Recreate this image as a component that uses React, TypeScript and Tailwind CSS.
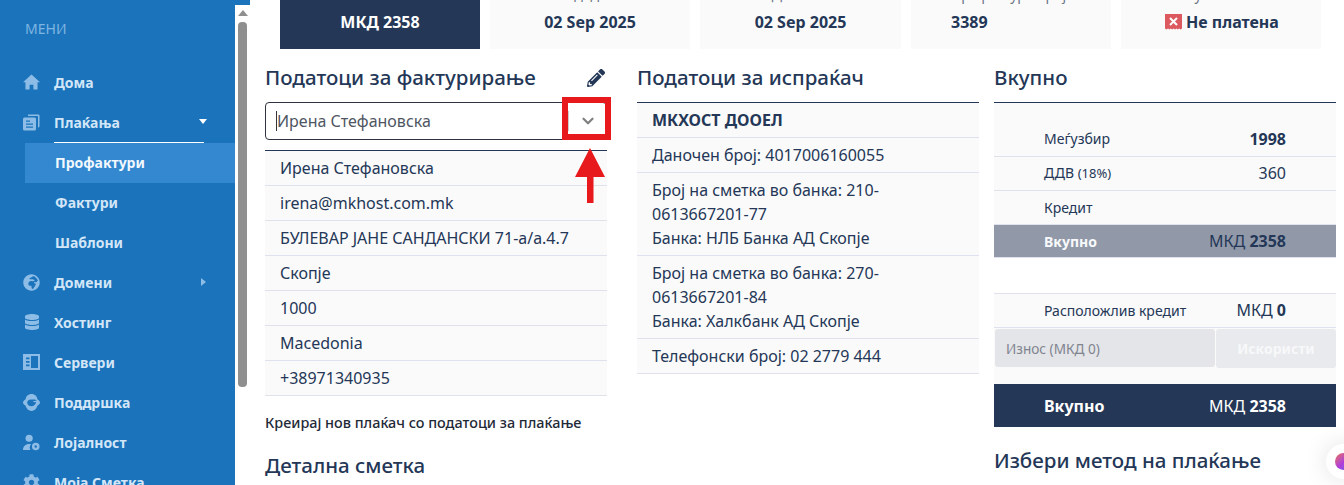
import React from "react";
import { FaGlobeAfrica, FaDatabase, FaCog, FaPencilAlt } from "react-icons/fa";
import { LuChevronDown } from "react-icons/lu";

const HomeIcon = () => (
  <svg width="18" height="16" viewBox="0 0 18 16" fill="currentColor">
    <path fillRule="evenodd" d="M9 0L18 8.300h-2.600V16H11v-5.200H7V16H2.600V8.300H0z" />
  </svg>
);
const CopyIcon = () => (
  <svg width="17" height="17" viewBox="0 0 17 17" fill="currentColor">
    <path d="M5 0.500h10.500a1 1 0 0 1 1 1V12a1.500 1.500 0 0 1-1.500 1.500V2.500a.5.5 0 0 0-.5-.5H5z" />
    <path fillRule="evenodd" d="M1.500 3.500h10a1.500 1.500 0 0 1 1.500 1.500v10a1.500 1.500 0 0 1-1.500 1.500h-10A1.500 1.500 0 0 1 0 15V5a1.500 1.500 0 0 1 1.500-1.500zM3 6.500v1.300h4V6.500zm0 3v1.300h7V9.500zm0 3v1.300h7V12.500z" />
  </svg>
);
const ServerIcon = () => (
  <svg width="17" height="16" viewBox="0 0 17 16" fill="currentColor">
    <path fillRule="evenodd" d="M0 0h17v16H0zM8 2v12h7V2z" />
    <path d="M3 3.500h3.500v1.800H3zM3 7h3.500v1.800H3zM3 10.500h3.500v1.800H3z" fill="#1a73bb" />
  </svg>
);
const SupportIcon = () => (
  <svg width="17" height="17" viewBox="0 0 17 17" fill="currentColor">
    <path fillRule="evenodd" d="M8.500 0C5 0 3 2.300 2.600 5.200 1.200 6 0 7.300 0 8.500s1.200 2.500 2.600 3.300C3.400 14.800 5.600 17 8.500 17s5.100-2.200 5.900-5.200c1.400-.8 2.600-2.100 2.600-3.300s-1.200-2.500-2.600-3.300C14 2.300 12 0 8.500 0zM4.200 8.500c.2-1.700 1.700-3 3.800-3h3c1.300 0 2.200.5 2.800 1.300-1.500.1-3.300.2-4.300.7 1 .6 2.500.7 3.700.6-.6 2.500-2.400 4.200-4.700 4.200-2.500 0-4.500-1.500-4.300-3.800z" />
  </svg>
);
const LoyaltyIcon = () => (
  <svg width="18" height="17" viewBox="0 0 18 17" fill="currentColor">
    <circle cx="6.500" cy="4" r="3.800" />
    <path d="M0 16.500c0-3.800 2.500-6.500 6.500-6.500 1 0 1.500.1 2 .4-.9 1-1.400 2.200-1.400 3.500 0 1 .3 1.900.8 2.600H0z" />
    <path fillRule="evenodd" d="M13.500 9.500a4 4 0 1 0 0 8 4 4 0 0 0 0-8zm0 2.700a1.300 1.300 0 1 1 0 2.600 1.300 1.300 0 0 1 0-2.600z" transform="translate(0 -.8)" />
  </svg>
);
const NotPaidIcon = () => (
  <svg width="17" height="16" viewBox="0 0 17 16" className="shrink-0">
    <path fill="#dc5a5f" d="M0 0h17v14.500l-1.400 1-1.400-1-1.400 1-1.400-1-1.400 1-1.400-1-1.400 1-1.400-1-1.400 1-1.400-1-1.400 1L0 14.500z" />
    <path stroke="#fff" strokeWidth="2" d="M5 4l7 7M12 4l-7 7" />
  </svg>
);

const Caret = ({ right }: { right?: boolean }) =>
  right ? (
    <span className="ml-auto mr-[29px] h-0 w-0 border-y-[4px] border-l-[5px] border-y-transparent border-l-[#8dbde6]" />
  ) : (
    <span className="ml-auto mr-[28px] mb-[2px] h-0 w-0 border-x-[4px] border-t-[5px] border-x-transparent border-t-white" />
  );

const nav = [
  { label: "Дома", icon: <HomeIcon /> },
  { label: "Плаќања", icon: <CopyIcon />, open: true },
  { label: "Профактури", sub: true, active: true },
  { label: "Фактури", sub: true },
  { label: "Шаблони", sub: true },
  { label: "Домени", icon: <FaGlobeAfrica size={17} />, right: true },
  { label: "Хостинг", icon: <FaDatabase size={16} /> },
  { label: "Сервери", icon: <ServerIcon /> },
  { label: "Поддршка", icon: <SupportIcon /> },
  { label: "Лојалност", icon: <LoyaltyIcon /> },
  { label: "Моја Сметка", icon: <FaCog size={17} /> },
];

function Sidebar() {
  return (
    <aside className="h-[485px] w-[235px] shrink-0 overflow-hidden bg-[#1a73bb] text-[14px] font-bold text-[#d3e6f7]">
      <div className="flex h-[63px] items-start pl-[25px] pt-[18px] text-[14px] font-normal leading-[21px] text-[#7fb5e2]">МЕНИ</div>
      {nav.map((n) =>
        n.sub ? (
          <div key={n.label} className={`ml-[25px] flex h-[40px] items-center pb-[2px] pl-[30px] ${n.active ? "bg-[#3388d0] text-[#f2f8fd]" : ""}`}>
            {n.label}
          </div>
        ) : (
          <div key={n.label} className="relative flex h-[40px] items-center pb-[2px] pl-[23px]">
            <span className="flex w-[31px] shrink-0 items-center text-[#8dbde6]">
              <span className="flex w-[17px] justify-center">{n.icon}</span>
            </span>
            <span>{n.label}</span>
            {n.open && <Caret />}
            {n.right && <Caret right />}
            {n.open && <span className="absolute bottom-0 left-[54px] h-px w-[150px] bg-white" />}
          </div>
        )
      )}
    </aside>
  );
}

function FakeScrollbar() {
  return (
    <div className="h-[485px] w-[15px] shrink-0 bg-white">
      <div className="h-[5px] bg-[#1a73bb]" />
      <div className="ml-[3px] mt-[5px] h-0 w-0 border-x-[5px] border-b-[6px] border-x-transparent border-b-[#8f8f8f]" />
      <div className="ml-[3px] mt-[6px] h-[365px] w-[9px] rounded-[4px] bg-[#8f8f8f]" />
    </div>
  );
}

const cards = [
  { value: "МКД 2358", dark: true, w: "w-[200px]" },
  { label: "Издадена", value: "02 Sep 2025", w: "w-[200px]" },
  { label: "Доспева", value: "02 Sep 2025", w: "w-[201px]" },
  { label: "Профактура број", value: "3389", w: "w-[200px]", left: "pl-[40px] items-start" },
  { label: "Статус", value: "Не платена", w: "w-[200px]", left: "pl-[44px] items-start", status: true },
];

function Cards() {
  return (
    <div className="ml-[30px] flex h-[49px] gap-[10px]">
      {cards.map((c, i) => (
        <div
          key={i}
          className={`flex flex-col justify-end pb-[15px] ${c.left ?? "items-center"} ${c.w} ${c.dark ? "bg-[#243757] text-white" : "bg-[#fafafa] text-[#243757]"}`}
        >
          {c.label && <div className="mb-[5px] whitespace-nowrap text-[14px] leading-[21px] text-[#6b7688]">{c.label}</div>}
          <div className="flex items-center gap-[4px] text-[16px] font-bold leading-[24px]">
            {c.status && <NotPaidIcon />}
            {c.value}
          </div>
        </div>
      ))}
    </div>
  );
}

const Heading = ({ children }: { children: React.ReactNode }) => (
  <h2 className="text-[20.5px] font-medium leading-[30px] text-[#243757]">{children}</h2>
);
const HeadRow = ({ children }: { children: React.ReactNode }) => (
  <div className="flex h-[53px] items-center justify-between pt-[3px]">{children}</div>
);
const Row = ({ children, bold }: { children: React.ReactNode; bold?: boolean }) => (
  <div className={`border-b border-[#dfe1ec] px-[15px] py-[5px] text-[16px] leading-[24px] text-[#243757] ${bold ? "font-bold" : ""}`}>{children}</div>
);

function BillingColumn() {
  return (
    <section className="relative w-[342px]">
      <HeadRow>
        <Heading>Податоци за фактурирање</Heading>
        <FaPencilAlt size={18} className="mr-[2px] mt-[1px] text-[#243757]" />
      </HeadRow>
      <div className="relative flex h-[38px] items-center rounded-[4px] border border-[#2d3340] bg-white">
        <span className="ml-[10px] h-[20px] w-px bg-[#333]" />
        <span className="text-[16px] text-[#4f5663]">Ирена Стефановска</span>
        <span className="ml-auto h-[20px] w-px bg-[#ccc]" />
        <span className="flex w-[37px] justify-center text-[#808080]">
          <LuChevronDown size={18} strokeWidth={3} />
        </span>
      </div>
      <div className="mt-[10px] border-t border-[#243757] bg-[#fafafa]">
        {["Ирена Стефановска", "irena@mkhost.com.mk", "БУЛЕВАР ЈАНЕ САНДАНСКИ 71-а/а.4.7", "Скопје", "1000", "Macedonia", "+38971340935"].map((t) => (
          <Row key={t}>{t}</Row>
        ))}
      </div>
      <p className="mt-[16px] text-[14.4px] font-medium leading-[21px] text-[#1f2a38]">Креирај нов плаќач со податоци за плаќање</p>
      <div className="mt-[17px]">
        <Heading>Детална сметка</Heading>
      </div>

      <div className="absolute left-[297px] top-[48px] h-[43px] w-[49px] border-[6px] border-[#e8191c]" />
      <svg className="absolute left-[310px] top-[99px]" width="30" height="56" viewBox="0 0 30 56" fill="#e8191c">
        <path d="M15 0L30 29H18.500V55H12V29H0z" />
      </svg>
    </section>
  );
}

function SenderColumn() {
  return (
    <section className="ml-[30px] w-[342px]">
      <HeadRow>
        <Heading>Податоци за испраќач</Heading>
      </HeadRow>
      <div className="border-t border-[#243757] bg-[#fafafa]">
        <Row bold>МКХОСТ ДООЕЛ</Row>
        <Row>Даночен број: 4017006160055</Row>
        <Row>
          Број на сметка во банка: 210-
          <br />
          0613667201-77
          <br />
          Банка: НЛБ Банка АД Скопје
        </Row>
        <Row>
          Број на сметка во банка: 270-
          <br />
          0613667201-84
          <br />
          Банка: Халкбанк АД Скопје
        </Row>
        <Row>Телефонски број: 02 2779 444</Row>
      </div>
    </section>
  );
}

function SumRow({ label, children, h }: { label: React.ReactNode; children?: React.ReactNode; h: string }) {
  return (
    <div className={`flex items-center justify-between border-b border-[#dfe1ec] px-[50px] pb-[1px] text-[#243757] ${h}`}>
      <span className="text-[14px]">{label}</span>
      <span className="text-[16px]">{children}</span>
    </div>
  );
}

function TotalsColumn() {
  return (
    <section className="ml-[15px] w-[342px]">
      <HeadRow>
        <Heading>Вкупно</Heading>
      </HeadRow>
      <div className="border-t border-[#243757] bg-[#fafafa]">
        <div className="flex h-[54px] items-end justify-between border-b border-[#dfe1ec] px-[50px] pb-[5px] text-[#243757]">
          <span className="text-[14px] leading-[24px]">Меѓузбир</span>
          <span className="text-[16px] font-bold leading-[24px]">1998</span>
        </div>
        <SumRow label={<>ДДВ <span className="text-[13px]">(18%)</span></>} h="h-[34px]">360</SumRow>
        <SumRow label="Кредит" h="h-[34px]" />
        <div className="flex h-[33px] items-center justify-between border-b border-[#dfe1ec] bg-[#9199a9] px-[50px]">
          <span className="text-[14px] font-bold text-[#f8f9fb]">Вкупно</span>
          <span className="text-[16px] text-[#243757]">
            МКД <b>2358</b>
          </span>
        </div>
      </div>
      <div className="mt-[35px] border-t border-[#dfe1ec] bg-[#fafafa] pb-[16px]">
        <SumRow label="Расположлив кредит" h="h-[34px]">
          МКД <b>0</b>
        </SumRow>
        <div className="flex h-[40px] items-start pt-[1px]">
          <div className="ml-[1px] flex h-[38px] w-[220px] items-center rounded-[3px] bg-[#e4e5e9] pl-[11px] pt-[2px] text-[13.6px] text-[#80848e]">Износ (МКД 0)</div>
          <div className="ml-[1px] flex h-[39px] flex-1 items-center justify-center rounded-[3px] bg-[#e9eaee] text-[14px] font-bold text-[#f7f8f9]">Искористи</div>
        </div>
      </div>
      <div className="flex h-[43px] items-center justify-between bg-[#243757] px-[50px] text-white">
        <span className="text-[16px] font-bold">Вкупно</span>
        <span className="text-[16px]">
          МКД <b>2358</b>
        </span>
      </div>
      <div className="mt-[18px]">
        <Heading>Избери метод на плаќање</Heading>
      </div>
    </section>
  );
}

export default function App() {
  return (
    <div className="relative flex h-[485px] w-[1344px] overflow-hidden bg-white font-['Noto_Sans',sans-serif]">
      <Sidebar />
      <FakeScrollbar />
      <main className="flex-1">
        <Cards />
        <div className="ml-[15px] flex">
          <BillingColumn />
          <SenderColumn />
          <TotalsColumn />
        </div>
      </main>
      <div className="absolute left-[1326px] top-[444px] flex h-[35px] w-[35px] items-center justify-center rounded-full bg-white shadow-[0_0_24px_rgba(0,0,0,0.12)]">
        <span className="h-[17px] w-[17px] rounded-full bg-gradient-to-br from-[#f0663a] via-[#b23cd8] to-[#5a5cf0]" />
      </div>
    </div>
  );
}
